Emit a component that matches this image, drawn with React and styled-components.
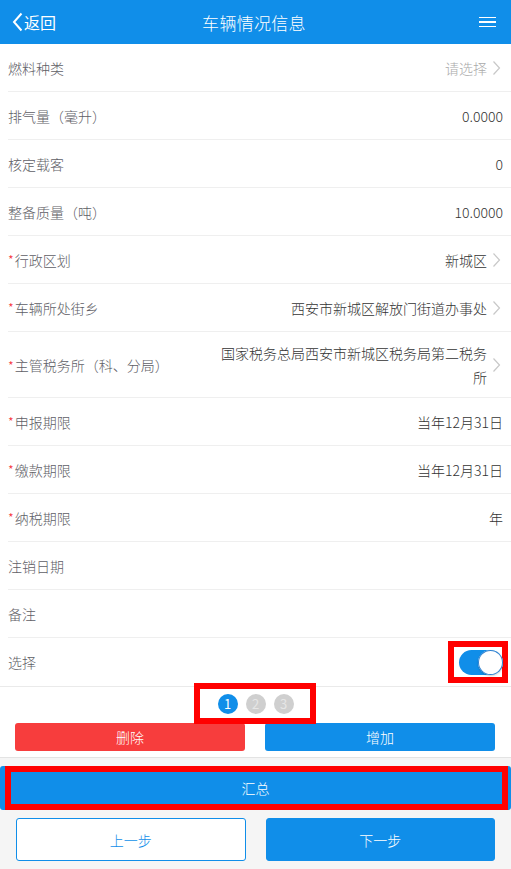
import React from "react";
import styled, { createGlobalStyle } from "styled-components";

const Global = createGlobalStyle`
  html, body { margin: 0; padding: 0; background: #f5f5f5; }
  body { font-family: "Noto Sans CJK SC", "Noto Sans", sans-serif; -webkit-font-smoothing: antialiased; }
  * { box-sizing: border-box; }
`;

const BLUE = "#108ee9";

const Page = styled.div`
  width: 511px;
  min-height: 869px;
  background: #f5f5f5;
  display: flex;
  flex-direction: column;
`;

const Header = styled.header`
  height: 44px;
  background: ${BLUE};
  display: grid;
  grid-template-columns: 1fr auto 1fr;
  align-items: center;
  color: #fff;
  padding: 0 15px 0 12px;
`;

const Back = styled.div`
  display: flex;
  align-items: center;
  font-size: 16px;
  gap: 1px;
`;

const Title = styled.h1`
  margin: 0;
  font-size: 17px;
  font-weight: 300;
  letter-spacing: 0.3px;
`;

const Menu = styled.div`
  justify-self: end;
  display: flex;
  flex-direction: column;
  gap: 3px;
  width: 17px;
  & > span { display: block; height: 1.5px; background: #fff; }
`;

const List = styled.div`
  background: #fff;
  border-bottom: 1px solid #eaeaea;
`;

const Row = styled.div`
  margin-left: 8px;
  padding: ${(p) => (p.$tall ? "9px 8px 8px 0" : "0 8px 0 0")};
  padding-right: ${(p) => (p.$right != null ? p.$right : 8)}px;
  min-height: ${(p) => (p.$tall ? 66 : 48)}px;
  display: flex;
  align-items: center;
  justify-content: space-between;
  border-bottom: 1px solid #efefef;
  font-size: 14px;
  font-weight: 300;
  &:last-child { border-bottom: none; }
`;

const Label = styled.div`
  color: #5e5e66;
  white-space: nowrap;
  display: flex;
  align-items: center;
`;

const Star = styled.span`
  color: #f5222d;
  font-size: 13px;
  margin-right: 1px;
`;

const Value = styled.div`
  display: flex;
  align-items: center;
  gap: 5px;
  color: ${(p) => (p.$placeholder ? "#aaa" : "#333")};
  text-align: right;
`;

const ValueText = styled.span`
  max-width: ${(p) => (p.$wrap ? "266px" : "none")};
  line-height: 24px;
`;

const Arrow = styled.svg`
  width: 9px;
  height: 16px;
  flex: none;
  margin-right: 2px;
`;

const ToggleFrame = styled.div`
  width: 60px;
  height: 42px;
  border: 6px solid #ff0000;
  display: flex;
  align-items: center;
  padding-left: 5px;
`;

const Toggle = styled.div`
  width: 44px;
  height: 25px;
  border-radius: 13px;
  background: ${BLUE};
  position: relative;
  flex: none;
  &::after {
    content: "";
    position: absolute;
    right: 0;
    top: 0;
    width: 25px;
    height: 25px;
    border-radius: 50%;
    background: #fff;
    box-shadow: 0 0 0 1px #2b7fd0 inset, 0 1px 2px rgba(0,0,0,0.2);
  }
`;

const White = styled.div`
  background: #fff;
  padding-bottom: 6px;
  border-bottom: 1px solid #e3e3e3;
`;

const Pager = styled.div`
  height: 36px;
  display: flex;
  justify-content: center;
  align-items: center;
  position: relative;
  z-index: 2;
`;

const PagerFrame = styled.div`
  width: 122px;
  height: 41px;
  margin-left: -2px;
  margin-top: -3px;
  border: 6px solid #ff0000;
  display: flex;
  align-items: center;
  justify-content: center;
  gap: 8px;
  padding-left: 2px;
`;

const Dot = styled.div`
  width: 20px;
  height: 20px;
  border-radius: 50%;
  background: ${(p) => (p.$active ? BLUE : "#cfcfcf")};
  color: ${(p) => (p.$active ? "#fff" : "#e6e6e6")};
  font-size: 13px;
  display: flex;
  align-items: center;
  justify-content: center;
  line-height: 1;
`;

const BtnRow = styled.div`
  display: grid;
  grid-template-columns: 1fr 1fr;
  gap: 20px;
  padding: 0 16px 0 15px;
`;

const SmallBtn = styled.button`
  height: 28px;
  border: none;
  border-radius: 3px;
  background: ${(p) => (p.$danger ? "#f73d3d" : BLUE)};
  color: #fff;
  font-family: inherit;
  font-size: 14px;
  font-weight: 300;
  padding: 0;
`;

const Footer = styled.div`
  padding: 8px 0 9px;
  display: flex;
  flex-direction: column;
  gap: 8px;
`;

const SummaryBtn = styled.button`
  position: relative;
  height: 44px;
  width: 100%;
  border: none;
  border-radius: 3px;
  background: ${BLUE};
  color: #fff;
  font-family: inherit;
  font-size: 14px;
  font-weight: 300;
  padding: 0;
  &::after {
    content: "";
    position: absolute;
    left: 5px;
    right: 3px;
    top: 0;
    bottom: 0;
    border: 6px solid #ff0000;
  }
`;

const StepRow = styled.div`
  display: grid;
  grid-template-columns: 1fr 1fr;
  gap: 20px;
  padding: 0 16px;
`;

const StepBtn = styled.button`
  height: 43px;
  border-radius: 3px;
  border: 1px solid ${BLUE};
  background: ${(p) => (p.$primary ? BLUE : "#fff")};
  color: ${(p) => (p.$primary ? "#fff" : BLUE)};
  font-family: inherit;
  font-size: 14px;
  font-weight: 300;
  padding: 0;
`;

const Chevron = () => (
  <Arrow viewBox="0 0 9 16">
    <path d="M1.5 1.5 L7.5 8 L1.5 14.5" fill="none" stroke="#c8c8c8" strokeWidth="1.2" />
  </Arrow>
);

const rows = [
  { label: "燃料种类", value: "请选择", placeholder: true, arrow: true },
  { label: "排气量（毫升）", value: "0.0000" },
  { label: "核定载客", value: "0" },
  { label: "整备质量（吨）", value: "10.0000" },
  { label: "行政区划", value: "新城区", req: true, arrow: true },
  { label: "车辆所处街乡", value: "西安市新城区解放门街道办事处", req: true, arrow: true },
  { label: "主管税务所（科、分局）", value: "国家税务总局西安市新城区税务局第二税务所", req: true, arrow: true, tall: true },
  { label: "申报期限", value: "当年12月31日", req: true },
  { label: "缴款期限", value: "当年12月31日", req: true },
  { label: "纳税期限", value: "年", req: true },
  { label: "注销日期", value: "" },
  { label: "备注", value: "" },
];

export default function App() {
  return (
    <Page>
      <Global />
      <Header>
        <Back>
          <svg width="11" height="20" viewBox="0 0 11 20">
            <path d="M9.5 1.5 L2 10 L9.5 18.5" fill="none" stroke="#fff" strokeWidth="2" />
          </svg>
          <span>返回</span>
        </Back>
        <Title>车辆情况信息</Title>
        <Menu>
          <span />
          <span />
          <span />
        </Menu>
      </Header>
      <List>
        {rows.map((r) => (
          <Row key={r.label} $tall={r.tall}>
            <Label>
              {r.req && <Star>*</Star>}
              {r.label}
            </Label>
            <Value $placeholder={r.placeholder}>
              <ValueText $wrap={r.tall}>{r.value}</ValueText>
              {r.arrow && <Chevron />}
            </Value>
          </Row>
        ))}
        <Row $right={3}>
          <Label>选择</Label>
          <ToggleFrame>
            <Toggle />
          </ToggleFrame>
        </Row>
      </List>
      <White>
        <Pager>
          <PagerFrame>
            <Dot $active>1</Dot>
            <Dot>2</Dot>
            <Dot>3</Dot>
          </PagerFrame>
        </Pager>
        <BtnRow>
          <SmallBtn $danger>删除</SmallBtn>
          <SmallBtn>增加</SmallBtn>
        </BtnRow>
      </White>
      <Footer>
        <SummaryBtn>汇总</SummaryBtn>
        <StepRow>
          <StepBtn>上一步</StepBtn>
          <StepBtn $primary>下一步</StepBtn>
        </StepRow>
      </Footer>
    </Page>
  );
}
